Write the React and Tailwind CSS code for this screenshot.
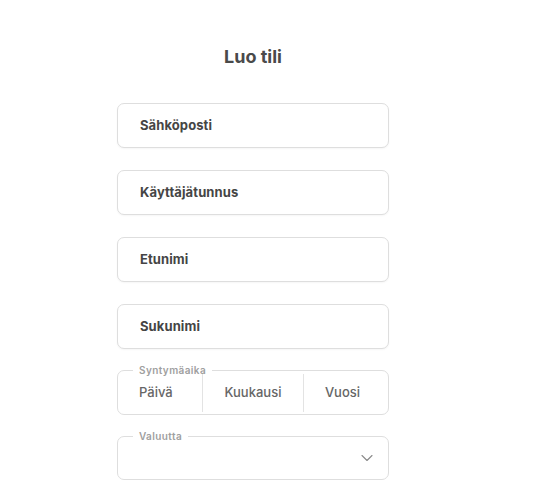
import React from "react";
import { ChevronDown } from "lucide-react";

const fields = ["Sähköposti", "Käyttäjätunnus", "Etunimi", "Sukunimi"];

const Field = ({ label }) => (
  <div className="h-[45px] w-full rounded-[7px] border-[1.5px] border-[#dedede] bg-white flex items-center pl-[22px] shadow-[0_1px_2px_rgba(0,0,0,0.04)]">
    <span className="text-[13px] font-bold text-[#454545] tracking-[0.1px]">{label}</span>
  </div>
);

const App = () => {
  return (
    <div className="min-h-screen bg-white" style={{ fontFamily: "Inter, 'Noto Sans', sans-serif" }}>
      <div className="w-[272px] ml-[117px] pt-[45px] flex flex-col">
        <h1 className="text-center text-[18px] font-bold text-[#4a4a4a] leading-[24px] mb-[34px]">
          Luo tili
        </h1>

        <div className="flex flex-col gap-[22px]">
          {fields.map((f) => (
            <Field key={f} label={f} />
          ))}

          <fieldset className="h-[51px] -mt-[7px] rounded-[7px] border-[1.5px] border-[#dedede] flex">
            <legend className="ml-[15px] px-[6px] text-[10px] font-semibold tracking-[0.4px] text-[#a0a0a0] leading-[12px]">
              Syntymäaika
            </legend>
            <div className="flex w-full h-[38px] -mt-[2px]">
              <div className="w-[85px] flex items-center pl-[21px] text-[13px] font-medium text-[#666] border-r border-[#e3e3e3]">
                Päivä
              </div>
              <div className="w-[101px] flex items-center justify-center text-[13px] font-medium text-[#666] border-r border-[#e3e3e3]">
                Kuukausi
              </div>
              <div className="flex-1 flex items-center justify-center pr-[7px] text-[13px] font-medium text-[#666]">
                Vuosi
              </div>
            </div>
          </fieldset>

          <fieldset className="h-[50px] -mt-[7px] rounded-[7px] border-[1.5px] border-[#dedede] flex">
            <legend className="ml-[15px] px-[6px] text-[10px] font-semibold tracking-[0.4px] text-[#a0a0a0] leading-[12px]">
              Valuutta
            </legend>
            <div className="flex w-full h-[38px] -mt-[3px] items-center justify-end pr-[11px]">
              <ChevronDown size={20} strokeWidth={1.3} className="text-[#8a8a8a]" />
            </div>
          </fieldset>
        </div>
      </div>
    </div>
  );
};

export default App;
